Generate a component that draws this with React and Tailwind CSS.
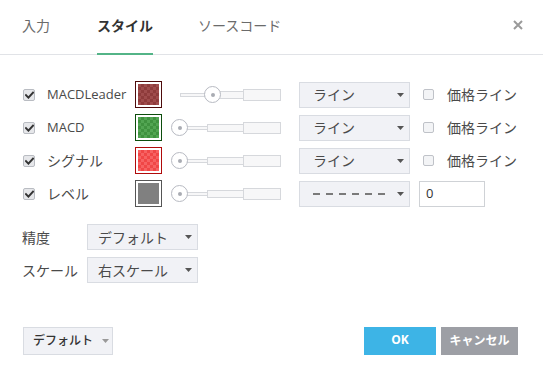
import React from "react";

const font = { fontFamily: '"Open Sans","Noto Sans CJK JP",sans-serif' };

function Check({ checked }) {
  if (checked) {
    return (
      <div className="w-[12px] h-[12px] rounded-[2px] border border-[#b9bcc2] bg-[#e6e7ea] flex items-center justify-center shrink-0">
        <svg width="9" height="8" viewBox="0 0 9 8">
          <path d="M1 4.2 L3.4 6.6 L8 1.6" fill="none" stroke="#333" strokeWidth="2" strokeLinecap="square" />
        </svg>
      </div>
    );
  }
  return <div className="w-[11px] h-[11px] rounded-[2px] border border-[#bfc2c8] bg-[#f3f4f6] shrink-0" />;
}

function Arrow({ color = "#555" }) {
  return (
    <svg width="7" height="4" viewBox="0 0 7 4" className="shrink-0">
      <path d="M0 0 L7 0 L3.5 4 Z" fill={color} />
    </svg>
  );
}

const swatches = {
  brown: ["border-[#4d0b0b]", "bg-[conic-gradient(#8e3b3b_25%,#9f4c4c_0_50%,#8e3b3b_0_75%,#9f4c4c_0)]"],
  green: ["border-[#0c4d0c]", "bg-[conic-gradient(#3f923f_25%,#52a552_0_50%,#3f923f_0_75%,#52a552_0)]"],
  red: ["border-[#b00a0a]", "bg-[conic-gradient(#f04646_25%,#f76262_0_50%,#f04646_0_75%,#f76262_0)]"],
  gray: ["border-[#555555]", "bg-[#808080]"],
};

function Swatch({ kind }) {
  const [border, bg] = swatches[kind];
  return (
    <div className={`w-[27px] h-[27px] border ${border} bg-white p-[2px] shrink-0`}>
      <div className={`w-full h-full ${bg} bg-size-[6px_6px]`} />
    </div>
  );
}

function Slider({ pos }) {
  return (
    <div className="relative w-[110px] h-[27px] ml-[9px] shrink-0 flex items-center">
      <div className="ml-[9px] flex items-center">
        <div className="w-[27px] h-[4px] border border-r-0 border-[#d6d8dc] bg-[#f7f7f8]" />
        <div className="w-[36px] h-[8px] border border-r-0 border-[#d6d8dc] bg-[#f7f7f8]" />
        <div className="w-[38px] h-[12px] border border-[#d6d8dc] bg-[#f7f7f8]" />
      </div>
      <div
        className="absolute top-[5px] w-[17px] h-[17px] rounded-full border border-[#b7bac2] bg-white flex items-center justify-center"
        style={{ left: pos }}
      >
        <div className="w-[4px] h-[4px] rounded-full bg-[#a9acb3]" />
      </div>
    </div>
  );
}

function Select({ children, pl = "pl-[13px]", pr = "pr-[5px]" }) {
  return (
    <div className={`w-[111px] h-[26px] border border-[#d9dce2] bg-[#f1f2f6] flex items-center justify-between ${pl} ${pr} shrink-0 text-[14px] text-[#4a4a4a]`}>
      {children}
    </div>
  );
}

function Row({ label, swatch, pos, level, jp }) {
  return (
    <div className="h-[27px] flex items-center pl-[23px]">
      <Check checked />
      <div className={`ml-[12px] w-[88px] ${jp ? "text-[14px]" : "text-[13px]"} text-[#4a4a4a] leading-none`}>{label}</div>
      <Swatch kind={swatch} />
      <Slider pos={pos} />
      <div className="ml-[18px]">
        {level ? (
          <Select>
            <div className="flex gap-[6px]">
              {[0, 1, 2, 3, 4, 5].map((i) => (
                <div key={i} className="w-[7px] h-[2px] bg-[#7a7a7a]" />
              ))}
            </div>
            <Arrow />
          </Select>
        ) : (
          <Select>
            <span>ライン</span>
            <Arrow />
          </Select>
        )}
      </div>
      {level ? (
        <div className="ml-[9px] w-[66px] h-[26px] border border-[#cfd2d6] bg-white flex items-center pl-[6px] text-[13px] text-[#333]">
          0
        </div>
      ) : (
        <>
          <div className="ml-[13px]">
            <Check checked={false} />
          </div>
          <div className="ml-[13px] text-[14px] text-[#4a4a4a]">価格ライン</div>
        </>
      )}
    </div>
  );
}

export default function App() {
  return (
    <div className="w-[543px] h-[380px] bg-white relative overflow-hidden" style={font}>
      <div className="h-[55px] border-b border-[#e1e3e7] flex pl-[22px] relative">
        <div className="h-[55px] flex items-center pb-[5px] text-[14px] text-[#6b6b6b] -mb-px">入力</div>
        <div className="h-[55px] ml-[47px] flex items-center pb-[3px] border-b-2 border-[#53b487] text-[14px] font-bold text-[#333] -mb-px">
          スタイル
        </div>
        <div className="h-[55px] ml-[45px] flex items-center pb-[5px] text-[14px] text-[#6b6b6b] -mb-px">ソースコード</div>
        <div className="ml-auto mr-[20px] h-[55px] flex items-center pb-[5px]">
          <svg width="10" height="10" viewBox="0 0 10 10">
            <path d="M1 1 L9 9 M9 1 L1 9" stroke="#9a9a9a" strokeWidth="2" />
          </svg>
        </div>
      </div>

      <div className="pt-[26px] flex flex-col gap-[6px]">
        <Row label="MACDLeader" swatch="brown" pos={33} />
        <Row label="MACD" swatch="green" pos={0} />
        <Row label="シグナル" swatch="red" pos={0} jp />
        <Row label="レベル" swatch="gray" pos={0} level jp />
      </div>

      <div className="mt-[17px] flex flex-col gap-[7px] pl-[22px]">
        <div className="flex items-center">
          <div className="w-[65px] text-[14px] text-[#4a4a4a]">精度</div>
          <Select pl="pl-[10px]" pr="pr-[5px]">
            <span>デフォルト</span>
            <Arrow />
          </Select>
        </div>
        <div className="flex items-center">
          <div className="w-[65px] text-[14px] text-[#4a4a4a]">スケール</div>
          <Select pl="pl-[10px]" pr="pr-[5px]">
            <span>右スケール</span>
            <Arrow />
          </Select>
        </div>
      </div>

      <div className="mt-[44px] flex items-center pl-[23px] pr-[25px]">
        <div className="w-[90px] h-[28px] border border-[#d9dce2] bg-[#f1f2f6] flex items-center pl-[9px] gap-[9px] text-[12px] text-[#333] font-medium">
          <span>デフォルト</span>
          <Arrow color="#999" />
        </div>
        <div className="ml-auto flex gap-[5px]">
          <div className="w-[72px] h-[28px] bg-[#3db4e6] text-white text-[12px] font-bold flex items-center justify-center pb-[3px]">
            OK
          </div>
          <div className="w-[77px] h-[28px] bg-[#9d9fa5] text-white text-[12px] font-bold flex items-center justify-center">
            キャンセル
          </div>
        </div>
      </div>
    </div>
  );
}
